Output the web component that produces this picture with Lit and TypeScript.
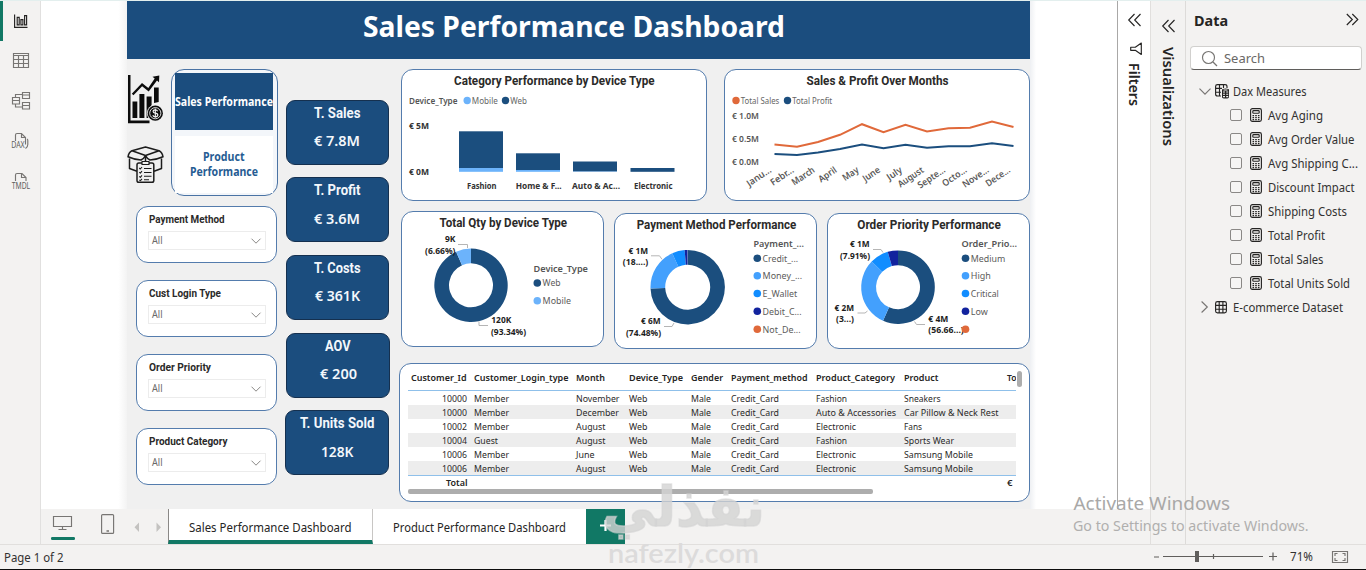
import { LitElement, html, svg, css } from "lit";
import { customElement } from "lit/decorators.js";

const NAVY = "#1b4e7e";
const SKY = "#6cb3fb";
const BLUE = "#43a0fd";
const AZURE = "#118dff";
const INDIGO = "#12239e";
const ORANGE = "#e0693a";

/* One text run inside a chart, set to a measured width. */
const st = (s: string, x: number, y: number, w: number, cls: string) =>
  svg`<text class=${cls} x=${x} y=${y} textLength=${w} lengthAdjust="spacingAndGlyphs">${s}</text>`;

/* One inline text run for ordinary flow layout. */
const fit = (s: string, w: number, cls: string, h = 14, b = 10.5) =>
  html`<svg class="fit" width=${w} height=${h}><text class=${cls} x="0" y=${b} textLength=${w} lengthAdjust="spacingAndGlyphs">${s}</text></svg>`;

const slice = (cx: number, cy: number, R: number, r: number, a: number, b: number, fill: string) => {
  const p = (t: number, q: number) =>
    `${(cx + q * Math.sin(t * 2 * Math.PI)).toFixed(2)} ${(cy - q * Math.cos(t * 2 * Math.PI)).toFixed(2)}`;
  const big = b - a > 0.5 ? 1 : 0;
  return svg`<path fill=${fill} d=${`M${p(a, R)}A${R} ${R} 0 ${big} 1 ${p(b, R)}L${p(b, r)}A${r} ${r} 0 ${big} 0 ${p(a, r)}Z`} />`;
};

const legend = (items: [string, number, string, number][], x: number) =>
  items.map(([s, y, c, w]) => svg`<circle cx=${x} cy=${y} r="3.8" fill=${c} />${s ? st(s, x + 5.3, y + 3.3, w, "leg") : ""}`);

@customElement("app-root")
export class AppRoot extends LitElement {
  static styles = css`
    :host { display: block; width: 1366px; height: 570px; overflow: hidden; position: relative; background: #f3f2f1; font-family: "Noto Sans", "Open Sans", sans-serif; }
    * { box-sizing: border-box; }
    svg { display: block; flex: none; overflow: visible; }
    .app { display: flex; flex-direction: column; height: 570px; }
    .topline { height: 1px; flex: none; background: #e3efee; }
    .main { display: flex; height: 543px; flex: none; }
    .rail { width: 41px; background: #f3f2f1; border-right: 1px solid #e1e0df; display: flex; }
    .mark { width: 3px; height: 40px; background: #117865; }
    .center { width: 1109px; display: flex; flex-direction: column; }
    .work { height: 508px; display: flex; background: #fff; }
    .side { flex: none; }
    .left { width: 86px; background: linear-gradient(90deg, #fff 90%, #f3f3f3); }
    .right { width: 87px; background: linear-gradient(270deg, #fff 93%, #eef0f3); }
    .page { width: 903px; background: #f0f0f0; display: flex; flex-direction: column; flex: none; }
    .banner { height: 58px; background: #1b4d7e; display: flex; justify-content: center; padding-right: 9px; flex: none; }
    .body { display: flex; height: 450px; }
    .colA { width: 151px; padding-top: 10px; }
    .nav-row { display: flex; height: 126px; }
    .nav { width: 107px; height: 127px; border: 1px solid #4a73a4; border-radius: 13px; padding: 3px 4px 3px 3px; background: #f3f6fa; display: flex; flex-direction: column; gap: 6px; }
    .nav-on { height: 57px; background: #1b4d7e; flex: none; display: flex; align-items: center; padding-top: 1px; }
    .nav-off { height: 57px; background: #fff; flex: none; display: flex; flex-direction: column; align-items: center; padding-top: 14px; gap: 1px; }
    .slicers { margin: 11px 0 0 9px; display: flex; flex-direction: column; gap: 17px; }
    .slicer { width: 141px; height: 57px; border: 1px solid #547cad; border-radius: 12px; background: #fff; padding: 7px 0 0 10.5px; }
    .slicer .fit { margin-left: 1.5px; }
    .select { width: 118px; height: 19px; border: 1px solid #ececec; margin-top: 4px; display: flex; align-items: center; justify-content: space-between; padding: 0 4px 0 2px; }
    .colB { width: 121px; padding: 40.8px 0 0 8px; display: flex; flex-direction: column; gap: 12.6px; }
    .kpi { width: 102.5px; height: 65px; flex: none; border: 1px solid #15304f; border-radius: 9px; background: #1b4d7e; display: flex; flex-direction: column; align-items: center; padding-top: 4px; gap: 10.5px; }
    .kpi-wide { width: 104px; }
    .kpi-shift { width: 104px; margin-left: -1px; }
    .colC { width: 631px; padding-top: 10px; }
    .row { display: flex; margin-left: 2px; }
    .row1 { gap: 17.5px; }
    .row2 { gap: 10px; margin-top: 10px; align-items: flex-start; height: 138px; }
    .card { background: #fff; border: 1px solid #547cad; border-radius: 12px; flex: none; }
    .wide { width: 305.5px; height: 132px; }
    .small { width: 203px; height: 136px; }
    .low { margin-top: 2px; }
    .grid { width: 631px; height: 139px; margin-top: 14px; position: relative; padding: 7px 0 0 8px; overflow: hidden; }
    .tr { display: grid; grid-template-columns: 59px 7px 102px 53px 62px 40px 85px 88px 103px 9px; width: 608px; height: 14px; align-items: center; overflow: hidden; }
    .tr .num { justify-self: end; grid-column: 1 / 2; }
    .tr .c2 { grid-column: 3; }
    .th { height: 20px; border-bottom: 1px solid #8fc0ea; }
    .th .num { margin-right: 1px; }
    .odd { background: #ededed; }
    .tfoot { border-top: 1px solid #8fc0ea; height: 14px; }
    .vbar { position: absolute; left: 617px; top: 7px; width: 5px; height: 16px; border-radius: 2.5px; background: #adadad; }
    .hbar { width: 465px; height: 4.5px; border-radius: 2px; background: #adadad; }
    .filters { width: 33px; border-left: 1px solid #a9a8a7; background: #fff; flex: none; }
    .viz { width: 35px; background: #f3f2f1; border-left: 1px solid #e1dfdd; flex: none; }
    .data { width: 181px; background: #f3f2f1; border-left: 1px solid #dddbd9; flex: none; }
    .data-head { display: flex; justify-content: space-between; padding: 11px 7.5px 0 8px; height: 45px; }
    .search { margin: 0 0 0 4px; width: 172px; height: 24px; border: 1px solid #d1d0ce; border-bottom: 1px solid #5f5d5b; border-radius: 4px; background: #fff; display: flex; align-items: center; padding-left: 10px; gap: 6px; }
    .tree { padding-top: 9px; }
    .node { display: flex; align-items: center; height: 24px; padding-left: 13px; }
    .leaf { display: flex; align-items: center; height: 24px; padding-left: 44px; }
    .box { width: 12px; height: 12px; border: 1px solid #8a8886; border-radius: 2px; margin-right: 8px; background: #f6f5f4; }
    .leaf .fit { margin-left: 6px; }
    .tabs { height: 35px; display: flex; background: #f3f2f1; flex: none; }
    .tab { height: 35px; background: #fff; display: flex; justify-content: center; padding-top: 10px; }
    .on { width: 205px; border-left: 1px solid #8a8886; border-bottom: 4px solid #117865; border-right: 1px solid #c8c6c4; }
    .off { width: 213px; }
    .add { background: #117865; }
    .status { height: 24.5px; flex: none; border-top: 1px solid #e1dfdd; display: flex; justify-content: space-between; }
    .status > .fit { margin: 4px 0 0 4px; }
    .edge { height: 1.5px; flex: none; background: #0c0c0c; }
    .over { position: absolute; left: 0; top: 0; pointer-events: none; }
    text { font-family: "Noto Sans", "Open Sans", sans-serif; }
    .h1 { font-size: 28px; font-weight: 700; fill: #fff; }
    .din { font-family: Roboto, sans-serif; font-size: 12px; font-weight: 700; fill: #2b2a29; }
    .din-s { font-family: Roboto, sans-serif; font-size: 10.8px; font-weight: 700; fill: #2b2a29; }
    .all { font-size: 10px; fill: #6a6968; }
    .nav-a { font-size: 11.5px; font-weight: 700; fill: #fff; }
    .nav-b { font-size: 11.5px; font-weight: 700; fill: #265c93; }
    .k1 { font-family: Roboto, sans-serif; font-size: 14.3px; font-weight: 700; fill: #f3f7fb; }
    .k2 { font-size: 14.8px; font-weight: 600; fill: #f3f7fb; }
    .ax { font-size: 8.1px; font-weight: 700; fill: #333; }
    .ax2 { font-size: 8.3px; font-weight: 600; fill: #555; }
    .ax3 { font-size: 9.3px; font-weight: 600; fill: #5a5958; }
    .leg-t { font-size: 8.8px; font-weight: 600; fill: #555; }
    .leg-s { font-size: 8.5px; fill: #666; }
    .leg { font-size: 9.3px; fill: #5c5b5a; }
    .dl { font-size: 8.1px; font-weight: 700; fill: #1d1d1d; }
    .lead { fill: none; stroke: #b5b5b5; stroke-width: 1; }
    .td { font-size: 9px; fill: #2b2a29; }
    .tb { font-size: 9.2px; font-weight: 600; fill: #252423; }
    .ui { font-size: 12.3px; fill: #323130; }
    .ui-t { font-size: 13px; fill: #252423; }
    .ui-h { font-size: 15px; font-weight: 700; fill: #252423; }
    .ui-g { font-size: 13.3px; fill: #6a6866; }
    .vert { font-size: 14px; font-weight: 600; fill: #252423; }
    .act1 { font-size: 18.5px; fill: #a9a8a7; }
    .act2 { font-size: 14.6px; fill: #b0afae; }
    .wm-ar { font-family: "DejaVu Sans", sans-serif; font-weight: 700; font-size: 55px; fill: #d3d3d3; fill-opacity: 0.8; stroke: #d3d3d3; stroke-width: 1.5; stroke-opacity: 0.6; }
    .wm-en { font-family: Lato, sans-serif; font-weight: 600; font-size: 26px; fill: #dcdbdb; }
    .i { fill: none; stroke: #777573; stroke-width: 1.15; }
    .d { fill: none; stroke: #252423; stroke-width: 1.15; }
    .tag { font-size: 8px; fill: #605e5c; }
  `;

  private rail() {
    return html`<div class="rail"><div class="mark"></div>
      <svg width="37" height="200" viewBox="3 1 37 200">
        <path class="d" stroke-width="1.4" d="M14.6 14.5V27.4H27.5M17.2 17.3h2v7.6h-2zM20.9 19.6h2v5.3h-2zM24.6 15.6h2v9.3h-2z" />
        <path class="i" d="M13.5 53.5h15v14h-15zM13.5 55.5h15M13.5 59.5h15M13.5 63.5h15M18.5 55.5v12M23.5 55.5v12" />
        <path class="i" d="M12.5 97.5h7v6.5h-7zM12.5 100.5h7M22.5 92.5h7v6h-7zM22.5 95h7M22.5 102.5h7v6.5h-7zM22.5 105.5h7M15.5 97.5v-3h7M15.5 104v3h7" />
        <path class="i" d="M15.500 141v-6q0-1.500 1.500-1.500h4.500l4 4v7M21.500 133.500v4h4M27 139q.800.400.800 1.500v4q0 2.500-2.300 4" />
        ${st("DAX", 11.2, 148.3, 13.5, "tag")}
        <path class="i" d="M15.500 181v-6q0-1.500 1.500-1.500h5l4 4V181M21.500 173.500v4h4.500" />
        ${st("TMDL", 11.7, 189, 18.5, "tag")}
      </svg></div>`;
  }

  private pictos() {
    return svg`
      <g fill="#0c0c0c">
        <path d="M128 75h2.500v45.500h19v2.700H128z" />
        <path d="M132.500 101.500h4.800v16.500h-4.800zM139.400 94h5v24h-5zM146.600 96.500h5v8.500l-3 5v8h-2zM154 87.500h4.700v14.500l-4.700 1z" />
        <path d="M152.500 76.800l6.800-1.300-.3 6.800-2-1.800-8.300 11-6.600-5.200-8.600 9-1.700-1.600 10.200-10.700 6.300 5 6.400-9.400z" />
        <circle cx="155.300" cy="113.200" r="8.400" fill="#f0f0f0" />
        <circle cx="155.300" cy="113.200" r="7.600" />
        <circle cx="155.300" cy="113.200" r="5.600" fill="none" stroke="#f0f0f0" stroke-width="0.9" />
        <path d="M157.600 111.200q-.6-1.400-2.300-1.400-2.200 0-2.200 1.700 0 1.300 2.200 1.700 2.500.4 2.500 1.900 0 1.700-2.400 1.700-2 0-2.600-1.600M155.300 108.600v9.200" fill="none" stroke="#f0f0f0" stroke-width="1.200" />
      </g>
      <g fill="none" stroke="#1c1c1c" stroke-width="1.500" stroke-linejoin="round">
        <path d="M132 150.800l13.500-3.800 13.500 3.800-13.500 4.700zM132 150.800q-3.200 1.500-4 6 6 2.800 13 3.200 3-1.500 4.500-4.500M159 150.800q3.200 1.500 4 6-6 2.800-13 3.200-3-1.500-4.500-4.500M129.500 158.500v10l7.500 2.800M161.500 158.500v10l-7.500 2.800M145.500 155.500v7" />
        <rect x="137" y="163" width="16.800" height="19.300" rx="1.800" fill="#f0f0f0" />
        <path d="M142 161.500h7v3h-7z" fill="#f0f0f0" stroke-width="1.200" />
        <path d="M139.300 168l1 1 1.700-2M139.300 172.200l1 1 1.700-2M139.300 176.400l1 1 1.700-2M139.300 180l1 .6 1.700-1.600M144 168.500h7.500M144 172.500h7.500M144 176.300h7.500M144 179.700h5" stroke-width="1.100" />
      </g>`;
  }

  private slicer(name: string, w: number) {
    return html`<div class="slicer">${fit(name, w, "din-s", 13, 9)}
      <div class="select">${fit("All", 10.5, "all", 13, 10)}
        <svg width="10" height="6" viewBox="0 0 10 6"><path d="M.5.7L5 5.200 9.500.7" fill="none" stroke="#8a8886" /></svg>
      </div></div>`;
  }

  private kpi(a: string, aw: number, b: string, bw: number, cls = "") {
    return html`<div class="kpi ${cls}">${fit(a, aw, "k1", 16, 13)}${fit(b, bw, "k2", 18, 15)}</div>`;
  }

  private bars() {
    const rows: [number, number, number, string, number, number][] = [
      [459, 131.3, 168, "Fashion", 467, 29.5],
      [516, 153.3, 170, "Home & F...", 515.7, 46],
      [573, 161.5, 171.5, "Auto & Ac...", 572, 48],
      [630.5, 168, 171.8, "Electronic", 634, 38.5],
    ];
    return html`<div class="card wide"><svg width="304" height="130" viewBox="402 70 304 130">
      ${st("Category Performance by Device Type", 454, 85, 200.5, "din")}
      ${st("Device_Type", 409, 104, 48.5, "leg-t")}
      <circle cx="467.2" cy="100.500" r="3.700" fill=${SKY} />${st("Mobile", 471.8, 104, 26, "leg-s")}
      <circle cx="505.500" cy="100.500" r="3.700" fill=${NAVY} />${st("Web", 510.3, 104, 16.7, "leg-s")}
      ${st("€ 5M", 409, 129, 20, "ax")}${st("€ 0M", 409, 175, 20, "ax")}
      ${rows.map(([x, y, m, s, tx, tw]) => svg`<rect x=${x} y=${y} width="44" height=${m - y} fill=${NAVY} /><rect x=${x} y=${m} width="44" height=${171.8 - m} fill=${SKY} />${st(s, tx, 189, tw, "ax")}`)}
    </svg></div>`;
  }

  private lines() {
    const xs = [774.5, 797, 818, 840, 862, 883.5, 905.5, 927, 948.5, 970, 992, 1013.5];
    const a = [144.5, 146.7, 142, 134.8, 124.2, 132.3, 124.8, 131.5, 128.3, 127.8, 121.5, 127];
    const b = [154, 154.9, 152.5, 149, 144.5, 148.2, 144.7, 147.8, 146.3, 146.3, 143.2, 146];
    const m: [string, number][] = [["Janu...", 27.5], ["Febr...", 26], ["March", 25.5], ["April", 20], ["May", 17.5], ["June", 19], ["July", 16.5], ["August", 29], ["Septe...", 31], ["Octo...", 27.5], ["Nove...", 29.5], ["Dece...", 27.5]];
    const pts = (v: number[]) => v.map((y, i) => `${xs[i]},${y}`).join(" ");
    return html`<div class="card wide"><svg width="304" height="130" viewBox="725 70 304 130">
      ${st("Sales & Profit Over Months", 806.5, 85, 142, "din")}
      <circle cx="736" cy="100.500" r="3.700" fill=${ORANGE} />${st("Total Sales", 740.8, 104, 38.5, "leg-s")}
      <circle cx="787.500" cy="100.500" r="3.700" fill=${NAVY} />${st("Total Profit", 792.2, 104, 40, "leg-s")}
      ${st("€ 1.0M", 732, 119, 27, "ax2")}${st("€ 0.5M", 732, 142.2, 27, "ax2")}${st("€ 0.0M", 732, 165, 27, "ax2")}
      <polyline points=${pts(a)} fill="none" stroke=${ORANGE} stroke-width="2" />
      <polyline points=${pts(b)} fill="none" stroke=${NAVY} stroke-width="2" />
      ${m.map(([s, w], i) => svg`<g transform=${`translate(${xs[i] - 2.5} 171.500) rotate(-34)`}>${st(s, -w, 0, w, "ax3")}</g>`)}
    </svg></div>`;
  }

  private donuts() {
    return html`
      <div class="card small"><svg width="201" height="134" viewBox="402 212 201 134">
        ${st("Total Qty by Device Type", 439.5, 227, 127.5, "din")}
        ${slice(471, 285.3, 36.7, 22, 0, 0.9334, NAVY)}${slice(471, 285.3, 36.7, 22, 0.9334, 1, SKY)}
        <path class="lead" d="M458 244.500h9.500v3.500M479 321.500v4h9" />
        ${st("9K", 445, 242, 10.5, "dl")}${st("(6.66%)", 425, 254, 30.5, "dl")}
        ${st("120K", 491.3, 323, 20, "dl")}${st("(93.34%)", 491, 335.2, 35, "dl")}
        ${st("Device_Type", 533.5, 272, 54.5, "leg-t")}
        ${legend([["Web", 283, NAVY, 18], ["Mobile", 300.7, SKY, 28.5]], 537.3)}
      </svg></div>
      <div class="card small low"><svg width="201" height="134" viewBox="615 214 201 134">
        ${st("Payment Method Performance", 636.7, 229, 159.5, "din")}
        ${slice(687.7, 287.2, 37.2, 22.5, 0, 0.7448, NAVY)}${slice(687.7, 287.2, 37.2, 22.5, 0.7448, 0.932, BLUE)}
        ${slice(687.7, 287.2, 37.2, 22.5, 0.932, 0.987, AZURE)}${slice(687.7, 287.2, 37.2, 22.5, 0.987, 0.999, INDIGO)}
        <path class="lead" d="M651 255.800h8.500l2.500 3.500M664 326.500h8l2-3.500" />
        ${st("€ 1M", 628.5, 254, 19.5, "dl")}${st("(18....)", 622.8, 265.3, 25.5, "dl")}
        ${st("€ 6M", 641, 324, 19.5, "dl")}${st("(74.48%)", 626, 336, 35, "dl")}
        ${st("Payment_...", 753.5, 247, 50.5, "leg-t")}
        ${legend([["Credit_...", 258.3, NAVY, 35.5], ["Money_...", 275.8, BLUE, 39.5], ["E_Wallet", 293.5, AZURE, 34.5], ["Debit_C...", 311.3, INDIGO, 39], ["Not_De...", 329.3, ORANGE, 38]], 757.3)}
      </svg></div>
      <div class="card small low"><svg width="201" height="134" viewBox="828 214 201 134">
        ${st("Order Priority Performance", 857.3, 229, 143.5, "din")}
        ${slice(898, 287.2, 36.8, 22, 0, 0.5666, NAVY)}${slice(898, 287.2, 36.8, 22, 0.5666, 0.873, BLUE)}
        ${slice(898, 287.2, 36.8, 22, 0.873, 0.955, AZURE)}${slice(898, 287.2, 36.8, 22, 0.955, 1, INDIGO)}
        <path class="lead" d="M873 249.500h8l2 3M857.500 313h7.500l2.500-2M914.500 321.500l2 3h8.500" />
        ${st("€ 1M", 850, 247.3, 19.5, "dl")}${st("(7.91%)", 840, 259.3, 30, "dl")}
        ${st("€ 2M", 834.5, 311.3, 19.5, "dl")}${st("(3...)", 836, 322.3, 18, "dl")}
        ${st("€ 4M", 928.3, 322.3, 20, "dl")}${st("(56.66...)", 928.3, 333.3, 35.5, "dl")}
        ${st("Order_Prio...", 961.5, 247, 55.5, "leg-t")}
        ${legend([["Medium", 258.3, NAVY, 34.5], ["High", 275.8, BLUE, 20], ["Critical", 293.5, AZURE, 28], ["Low", 311.3, INDIGO, 17], ["", 329.3, ORANGE, 0]], 965.5)}
      </svg></div>`;
  }

  private table() {
    const W: Record<string, number> = { "10000": 25, "10002": 25, "10004": 25, "10006": 25, Member: 35, Guest: 24, November: 43.5, December: 43, August: 29.5, June: 18.5, Web: 18.5, Male: 20, Credit_Card: 48, Fashion: 31, "Auto & Accessories": 80, Electronic: 40, Sneakers: 36.5, "Car Pillow & Neck Rest": 94.5, Fans: 18, "Sports Wear": 50, "Samsung Mobile": 69 };
    const rows = [
      ["10000", "Member", "November", "Fashion", "Sneakers"],
      ["10000", "Member", "December", "Auto & Accessories", "Car Pillow & Neck Rest"],
      ["10002", "Member", "August", "Electronic", "Fans"],
      ["10004", "Guest", "August", "Fashion", "Sports Wear"],
      ["10006", "Member", "June", "Electronic", "Samsung Mobile"],
      ["10006", "Member", "August", "Electronic", "Samsung Mobile"],
    ];
    const c = (s: string) => html`<div>${fit(s, W[s], "td", 14, 10.7)}</div>`;
    const hd = (s: string, w: number) => fit(s, w, "tb", 14, 6.7);
    const h: [string, number][] = [["Month", 29], ["Device_Type", 54], ["Gender", 32], ["Payment_method", 76.5], ["Product_Category", 79], ["Product", 34.5], ["To", 9.5]];
    return html`<div class="card grid">
      <div class="tr th"><div class="num">${hd("Customer_Id", 55.5)}</div><div class="c2">${hd("Customer_Login_type", 94.5)}</div>${h.map(([s, w]) => html`<div>${hd(s, w)}</div>`)}</div>
      ${rows.map((r, i) => html`<div class="tr ${i % 2 ? "odd" : ""}"><div class="num">${fit(r[0], W[r[0]], "td", 14, 10.7)}</div><div class="c2">${fit(r[1], W[r[1]], "td", 14, 10.7)}</div>${[r[2], "Web", "Male", "Credit_Card", r[3], r[4]].map(c)}</div>`)}
      <div class="tr tfoot"><div class="num">${fit("Total", 21.5, "tb", 14, 9.7)}</div><div class="c2"></div>${[1, 2, 3, 4, 5, 6].map(() => html`<div></div>`)}<div>${fit("€", 5.5, "tb", 14, 9.7)}</div></div>
      <div class="hbar"></div><div class="vbar"></div>
    </div>`;
  }

  private dataPane() {
    const items: [string, number][] = [["Avg Aging", 55], ["Avg Order Value", 86.5], ["Avg Shipping C...", 90], ["Discount Impact", 86.5], ["Shipping Costs", 79], ["Total Profit", 57], ["Total Sales", 55.5], ["Total Units Sold", 82]];
    return html`<div class="data">
      <div class="data-head">${fit("Data", 34, "ui-h", 20, 14.3)}
        <svg width="13" height="14" viewBox="0 0 13 14"><path class="d" d="M.8 2l5.500 5.500L.8 13M6.300 2l5.500 5.500-5.500 5.500" /></svg></div>
      <div class="search"><svg width="17" height="17" viewBox="0 0 17 17"><circle class="i" cx="7.500" cy="7.500" r="6" /><path class="i" d="M12 12l4 4" /></svg>${fit("Search", 41, "ui-g", 16, 12.5)}</div>
      <div class="tree">
        <div class="node"><svg width="12" height="7" viewBox="0 0 12 7"><path class="i" d="M.5.600L6 6.200 11.500.600" /></svg>
          <svg width="22" height="15" viewBox="-4 0 22 15"><path class="d" d="M6 12H2.500Q.6 12 .6 10V2.500Q.6.600 2.500.600H10Q12 .6 12 2.500V4M.6 4.400H7M.6 8.200H6M4.500.600V12M8.500.600V4" /><path d="M7 6q0-1.500 3.500-1.500T14 6v7q0 1.500-3.500 1.500T7 13z" fill="#252423" /><path d="M8 8h2M11.200 8h2M8 10.300h2M11.200 10.300h2M8 12.600h2M11.200 12.600h2M8.500 6h4" stroke="#f3f2f1" stroke-width="1.100" /></svg>
          ${fit("Dax Measures", 73.5, "ui", 16, 12.5)}</div>
        ${items.map(([s, w]) => html`<div class="leaf"><div class="box"></div>
          <svg width="12" height="14" viewBox="0 0 12 14"><rect class="d" x=".6" y=".6" width="10.800" height="12.800" rx="1.800" /><rect class="d" x="2.800" y="2.600" width="6.400" height="2.600" rx=".8" stroke-width=".9" /><path d="M2.500 7.700h7M2.500 9.700h7M2.500 11.600h7" stroke="#252423" stroke-width="1.300" stroke-dasharray="1.600 1.100" /></svg>
          ${fit(s, w, "ui", 16, 12.5)}</div>`)}
        <div class="node"><svg width="12" height="12" viewBox="-2 0 12 12"><path class="i" d="M.6.500L6.300 6 .6 11.500" /></svg>
          <svg width="22" height="13" viewBox="-4 0 22 13"><path class="d" d="M2.500.600h7q1.900 0 1.900 1.900v7.500q0 1.900-1.900 1.900h-7Q.6 11.900.6 10V2.500Q.6.600 2.500.600zM.6 4.400h10.800M.6 8.200h10.800M4.200.600v11.300M7.900.600v11.300" /></svg>
          ${fit("E-commerce Dataset", 110, "ui", 16, 12.5)}</div>
      </div></div>`;
  }

  render() {
    return html`<div class="app">
      <div class="topline"></div>
      <div class="main">
        ${this.rail()}
        <div class="center">
          <div class="work">
            <div class="side left"></div>
            <div class="page">
              <div class="banner">${fit("Sales Performance Dashboard", 422, "h1", 57, 35.8)}</div>
              <div class="body">
                <div class="colA">
                  <div class="nav-row"><svg width="44" height="126" viewBox="127 69 44 126">${this.pictos()}</svg>
                    <div class="nav"><div class="nav-on">${fit("Sales Performance", 98, "nav-a", 14, 11)}</div>
                      <div class="nav-off">${fit("Product", 41.5, "nav-b", 14, 11)}${fit("Performance", 68, "nav-b", 14, 11)}</div></div></div>
                  <div class="slicers">${this.slicer("Payment Method", 75.5)}${this.slicer("Cust Login Type", 72)}${this.slicer("Order Priority", 62)}${this.slicer("Product Category", 78.5)}</div>
                </div>
                <div class="colB">${this.kpi("T. Sales", 46.5, "€ 7.8M", 46)}${this.kpi("T. Profit", 46.5, "€ 3.6M", 46)}${this.kpi("T. Costs", 46.5, "€ 361K", 45)}${this.kpi("AOV", 25.5, "€ 200", 37, "kpi-wide")}${this.kpi("T. Units Sold", 74.5, "128K", 32.5, "kpi-shift")}</div>
                <div class="colC">
                  <div class="row row1">${this.bars()}${this.lines()}</div>
                  <div class="row row2">${this.donuts()}</div>
                  ${this.table()}
                </div>
              </div>
            </div>
            <div class="side right"></div>
            <div class="filters"><svg width="32" height="120" viewBox="1118 1 32 120">
              <path class="d" d="M1134.500 14l-5.800 6 5.800 6M1140.500 14l-5.800 6 5.800 6" />
              <path class="d" d="M1141.300 43v11.500l-6-4.200h-4.600v-3.100h4.600z" stroke-linejoin="round" />
              <g transform="translate(1129.300 63) rotate(90)">${st("Filters", 0, 0, 43, "vert")}</g></svg></div>
          </div>
          <div class="tabs">
            <svg width="127" height="35" viewBox="41 509 127 35">
              <path class="i" stroke-width="1.400" d="M53.500 516.500h18v10h-18zM62.500 526.500v3M58.500 529.500h8" />
              <rect x="51" y="537" width="24" height="3" rx="1.200" fill="#117865" />
              <rect class="i" x="101.600" y="514.600" width="12" height="18.800" rx="1" /><path d="M106.500 531h2.500" stroke="#605e5c" stroke-width="1.300" />
              <path d="M139 522.500v9.500l-4.500-4.700zM156.500 522.500v9.500l4.500-4.700z" fill="#c3c2c0" />
            </svg>
            <div class="tab on">${fit("Sales Performance Dashboard", 162.5, "ui-t", 18, 13)}</div>
            <div class="tab off">${fit("Product Performance Dashboard", 173, "ui-t", 18, 13)}</div>
            <svg class="add" width="39" height="35" viewBox="586 509 39 35"><path d="M600 525.500h11M605.500 520v11" stroke="#fff" stroke-width="2.200" /></svg>
          </div>
        </div>
        <div class="viz"><svg width="34" height="160" viewBox="1151 1 34 160">
          <path class="d" d="M1168.500 20l-5.800 6 5.800 6M1174.500 20l-5.800 6 5.800 6" />
          <g transform="translate(1162.500 47) rotate(90)">${st("Visualizations", 0, 0, 99, "vert")}</g></svg></div>
        ${this.dataPane()}
      </div>
      <div class="status">${fit("Page 1 of 2", 59.5, "ui", 16, 13)}
        <svg width="216" height="24" viewBox="1150 545 216 24">
          <path d="M1154 557h5M1163 556.500h100M1213.500 554v5M1269 556.500h8M1273 552.500v8" stroke="#605e5c" stroke-width="1.200" />
          <rect x="1195" y="551" width="4" height="11" fill="#605e5c" />
          ${st("71%", 1290, 561, 23, "ui")}
          <path class="i" d="M1332.500 551.500h15v11h-15zM1335 556v-2.500h2.500M1342.500 553.500h2.500v2.500M1345 558v2.500h-2.500M1337.500 560.500h-2.500v-2.500" />
        </svg></div>
      <div class="edge"></div>
    </div>
    <svg class="over" width="1366" height="570">
      <text class="wm-ar" x="602" y="526" textLength="163" lengthAdjust="spacingAndGlyphs">نفذلي</text>
      ${st("nafezly.com", 608, 563, 151, "wm-en")}
      ${st("Activate Windows", 1073.5, 510, 156.5, "act1")}
      ${st("Go to Settings to activate Windows.", 1073, 531, 235.5, "act2")}
    </svg>`;
  }
}
